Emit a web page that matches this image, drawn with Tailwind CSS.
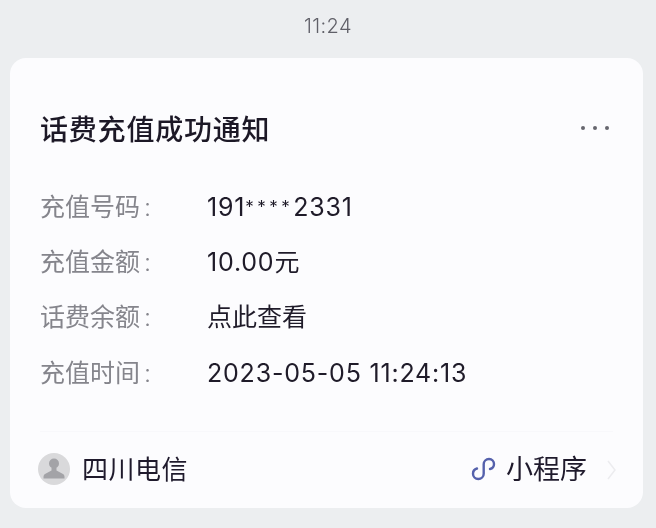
<!DOCTYPE html>
<html lang="zh-CN">
<head>
    <meta charset="UTF-8" />
    <title>话费充值成功通知</title>
    <script src="https://cdn.jsdelivr.net/npm/@tailwindcss/browser@4"></script>
</head>
<body class="bg-[#eceef0] w-[656px] h-[528px] overflow-hidden font-['Inter','Noto_Sans_CJK_SC',sans-serif]">
    <div class="blur-[0.35px]">
        <!-- time -->
        <div class="h-[58px] pt-[13px] text-center text-[20px] leading-[26px] font-light tracking-[0.4px] text-[#606068]">11:24</div>

        <!-- card -->
        <div class="ml-[10px] w-[633px] h-[450px] rounded-[16px] bg-[#fcfcfe] flex flex-col">
            <div class="h-[374px] mx-[30px] border-b border-[#f8f8fb]">
                <div class="flex items-center justify-between pt-[51px] h-[93px]">
                    <h1 class="text-[28px] leading-[36px] font-medium tracking-[0.8px] text-[#1c1826]">话费充值成功通知</h1>
                    <div class="flex gap-[8px] mr-[4px] mb-[4px]">
                        <span class="w-[4px] h-[4px] rounded-full bg-[#66666e]"></span>
                        <span class="w-[4px] h-[4px] rounded-full bg-[#66666e]"></span>
                        <span class="w-[4px] h-[4px] rounded-full bg-[#66666e]"></span>
                    </div>
                </div>
                <div class="mt-[28px] grid grid-cols-[167px_1fr] auto-rows-[55.4px] items-center text-[25px] leading-[34px] text-[#1f1b29]">
                    <div class="text-[#85858c]">充值号码<span class="ml-[4px] font-light">:</span></div>
                    <div class="tracking-[0.8px]">191<span class="text-[17px] tracking-[3.500px] align-[3px]">****</span>2331</div>
                    <div class="text-[#85858c]">充值金额<span class="ml-[4px] font-light">:</span></div>
                    <div class="tracking-[0.8px]">10.00元</div>
                    <div class="text-[#85858c]">话费余额<span class="ml-[4px] font-light">:</span></div>
                    <div>点此查看</div>
                    <div class="text-[#85858c]">充值时间<span class="ml-[4px] font-light">:</span></div>
                    <div class="tracking-[0.8px]">2023-05-05 11:24:13</div>
                </div>
            </div>
            <div class="flex-1 flex items-center justify-between pl-[28px] pr-[27px] pb-[1px]">
                <div class="flex items-center gap-[12px]">
                    <svg class="w-[32px] h-[32px] mb-[2px]" viewBox="0 0 32 32">
                        <circle cx="16" cy="16" r="16" fill="#d9d9db" />
                        <circle cx="16" cy="10.500" r="5" fill="#a3a3a7" />
                        <path d="M13.500 14.500h5v3l6.500 3.500c1 .6 1.500 1.500 1.500 3v1.500h-21v-1.500c0-1.500.5-2.400 1.500-3l6.500-3.500z" fill="#a3a3a7" />
                    </svg>
                    <span class="text-[26px] leading-[34px] tracking-[0.5px] text-[#1f1a2c]">四川电信</span>
                </div>
                <div class="flex items-center">
                    <svg class="w-[26px] h-[26px] mr-[9px] mb-[2px]" viewBox="0 0 26 26" fill="none" stroke="#5561ac" stroke-width="2.400" stroke-linecap="round">
                        <path d="M6 12.500c-2.300.7-4 2.700-4 5.200 0 3 2.300 5.300 5.300 5.300s5.400-2.300 5.400-5.300v-9.400c0-3 2.300-5.300 5.300-5.300s5 2.300 5 5c0 2.500-1.700 4.500-4 5" />
                    </svg>
                    <span class="text-[27px] leading-[34px] text-[#1f1a2c]">小程序</span>
                    <svg class="w-[9px] h-[20px] ml-[20px]" viewBox="0 0 9 20" fill="none" stroke="#ececef" stroke-width="1.500">
                        <path d="M1 1l7 9-7 9" />
                    </svg>
                </div>
            </div>
        </div>
    </div>
</body>
</html>
